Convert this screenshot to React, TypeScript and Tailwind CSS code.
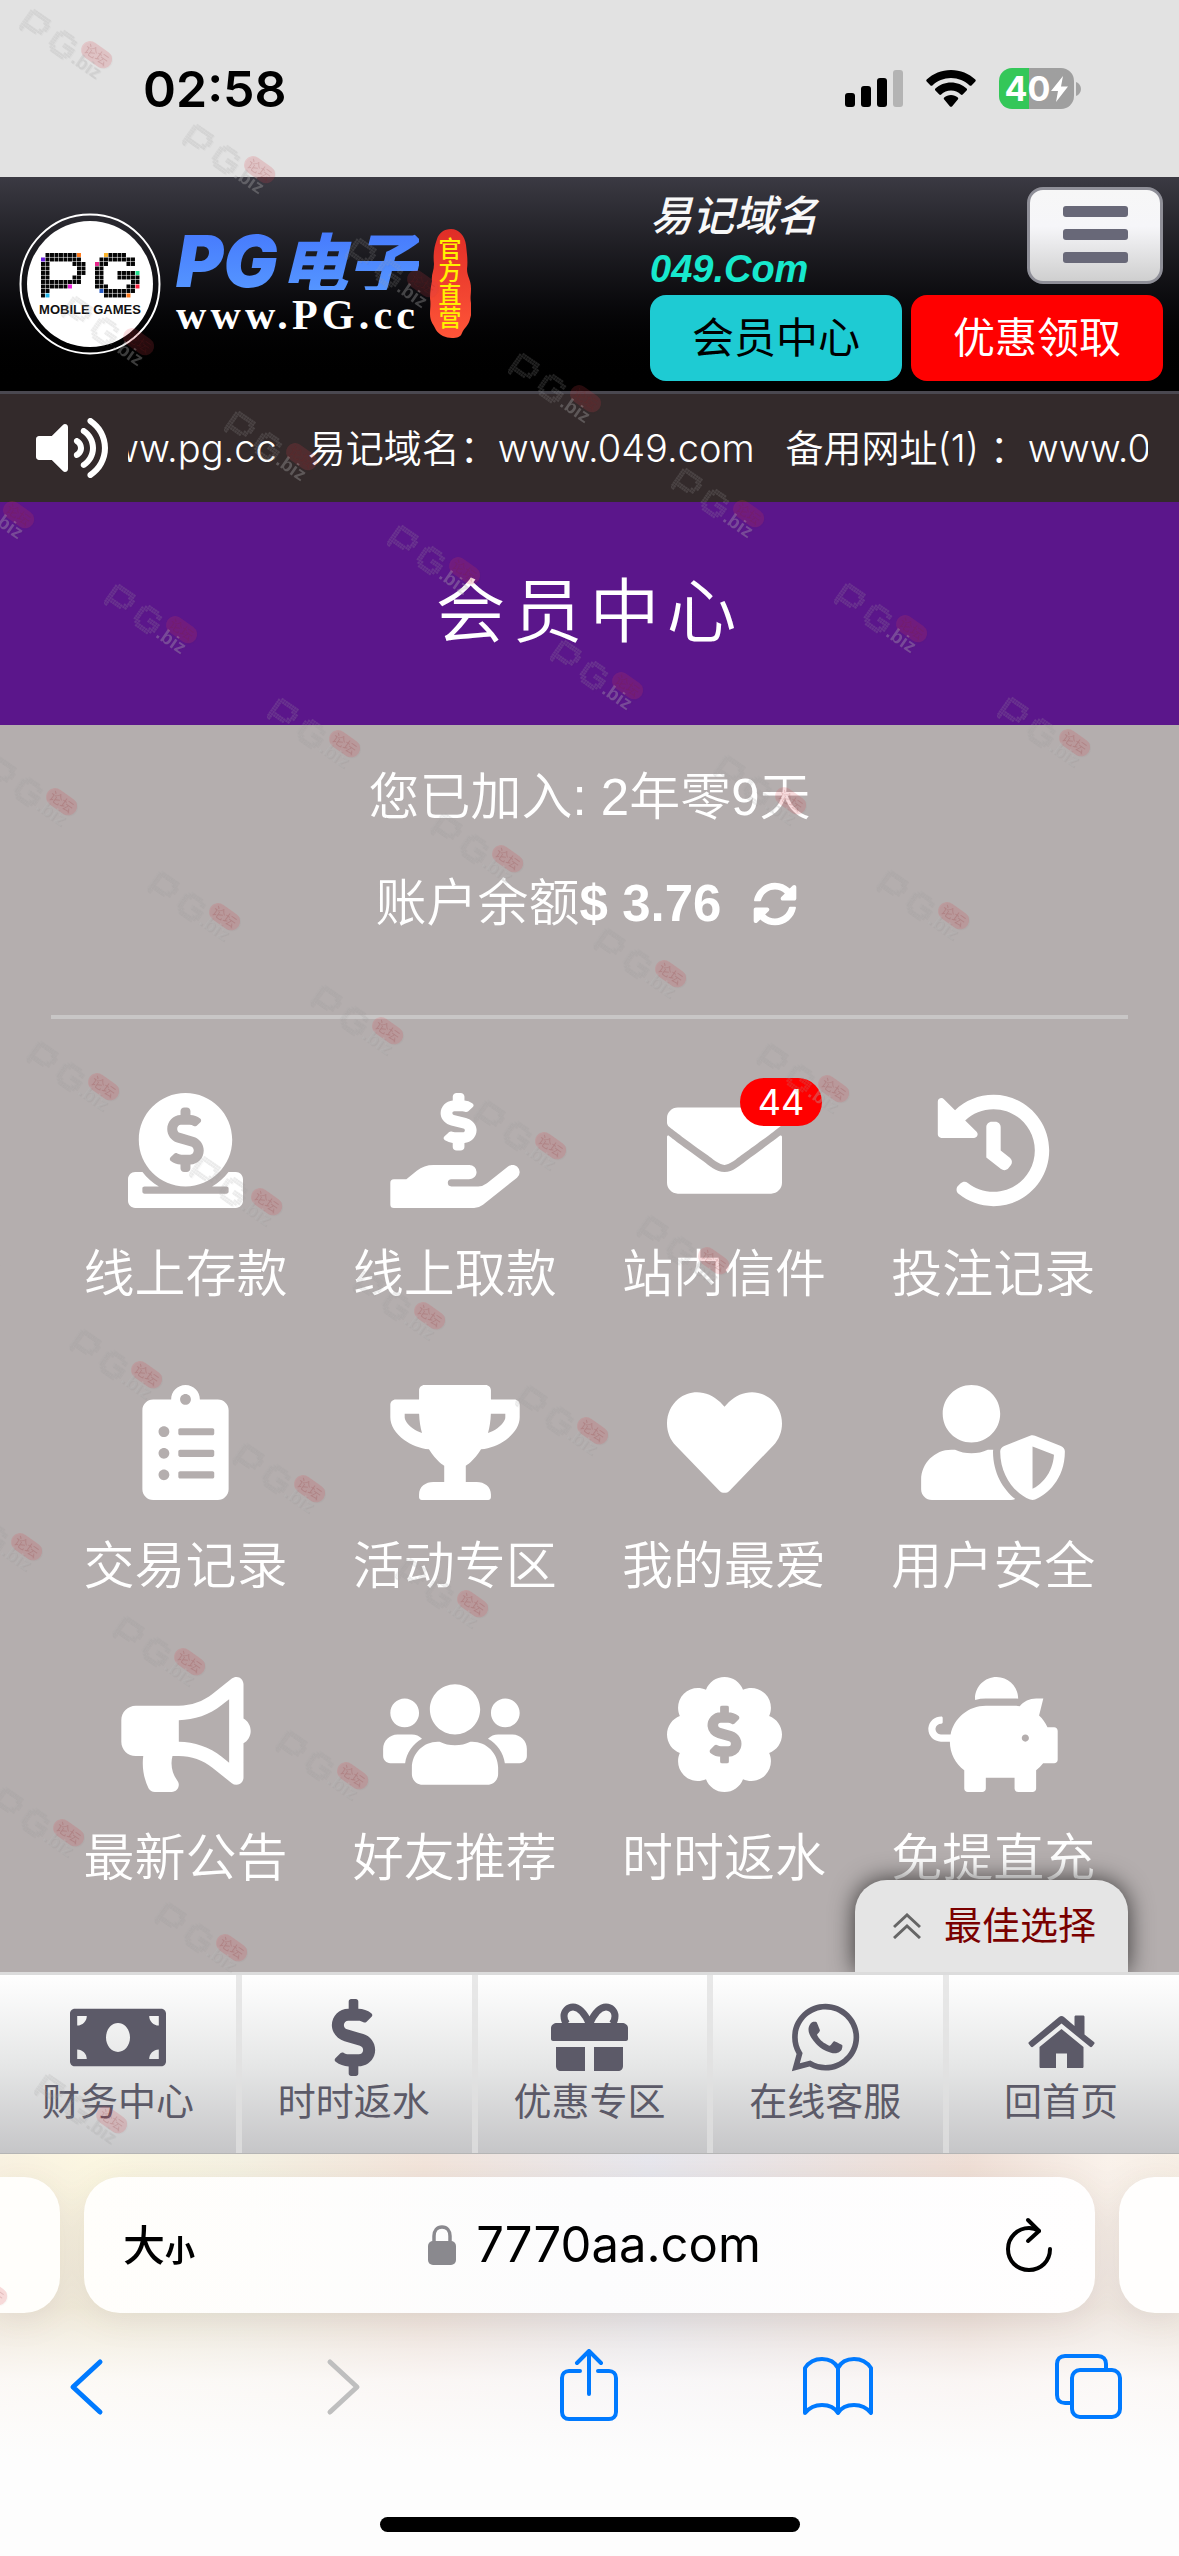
import type { ReactNode } from 'react';
import type { IconType } from 'react-icons';
import {
  FaBullhorn,
  FaClipboardList,
  FaDollarSign,
  FaDonate,
  FaEnvelope,
  FaHandHoldingUsd,
  FaHeart,
  FaHistory,
  FaMoneyBill,
  FaPiggyBank,
  FaSyncAlt,
  FaTrophy,
  FaUsers,
  FaUserShield,
  FaVolumeUp,
  FaWhatsapp,
} from 'react-icons/fa';

const P_ROWS = [
  '.#######o.',
  'v########.',
  '##.....###',
  '##......##',
  '##......##',
  '##.....##.',
  '#########.',
  '######m...',
  '##........',
  '#c........',
];

const G_ROWS = [
  '..y####...',
  '.########.',
  'k##....##.',
  '##........',
  '##...####g',
  '##...#####',
  '##......##',
  '###....##r',
  '.b#######.',
  '..#####o..',
];

const DOT_COLORS: Record<string, string> = {
  '#': '#050505',
  o: '#ff7a1a',
  v: '#6a1fe0',
  m: '#ec1fd8',
  c: '#25b7ea',
  y: '#fdb52a',
  k: '#e8248a',
  g: '#23e08f',
  r: '#fb2440',
  b: '#2358c4',
};

function Dots({ rows, x, y, cell, mono }: { rows: string[]; x: number; y: number; cell: number; mono?: boolean }) {
  return (
    <g>
      {rows.flatMap((row, r) =>
        row.split('').map((ch, c) =>
          ch === '.' ? null : (
            <rect
              key={`${r}-${c}`}
              x={x + c * cell}
              y={y + r * cell}
              width={cell * 0.88}
              height={cell * 0.88}
              fill={mono ? 'currentColor' : DOT_COLORS[ch]}
            />
          )
        )
      )}
    </g>
  );
}

function StatusBar() {
  return (
    <div className="flex h-[177px] items-center justify-between bg-[#e2e2e2] pl-[143px] pr-[98px]">
      <time className="font-['Inter',sans-serif] text-[50px] font-semibold leading-[60px] text-black">02:58</time>
      <div className="flex items-center gap-[23px]">
        <svg viewBox="0 0 58 37" className="h-[37px] w-[58px]" aria-label="Signal">
          <rect x="0" y="23" width="10" height="14" rx="3" />
          <rect x="16" y="16" width="10" height="21" rx="3" />
          <rect x="32" y="8" width="10" height="29" rx="3" />
          <rect x="48" y="0" width="10" height="37" rx="3" fill="#b4b4b4" />
        </svg>
        <svg viewBox="0 0 50 37" className="h-[37px] w-[50px]" aria-label="Wi-Fi">
          <path d="M25 0C34.500 0 43 3.600 49.300 9.600c.6.6.6 1.400 0 2L45.500 15.400c-.5.5-1.300.5-1.900 0C38.700 10.800 32.200 8 25 8S11.300 10.800 6.400 15.400c-.6.5-1.400.5-1.900 0L.7 11.600c-.6-.6-.6-1.400 0-2C7 3.600 15.500 0 25 0z" />
          <path d="M25 12.500c6 0 11.500 2.300 15.600 6.100.6.6.6 1.400 0 2l-3.900 3.900c-.5.5-1.300.5-1.900 0C32.200 22 28.800 20.600 25 20.600s-7.200 1.400-9.800 3.900c-.6.5-1.400.5-1.900 0l-3.900-3.900c-.6-.6-.6-1.400 0-2C13.500 14.800 19 12.500 25 12.500z" />
          <path d="M25 25c2.600 0 5 1 6.800 2.600.6.6.6 1.400 0 2L26 36.400c-.6.6-1.400.6-2 0l-5.800-6.800c-.6-.6-.6-1.400 0-2C20 26 22.400 25 25 25z" />
        </svg>
        <div className="flex items-center gap-[2px]">
          <div className="flex h-[41px] w-[75px] items-center justify-center gap-[1px] rounded-[13px] bg-linear-to-r from-[#34c759] from-40% to-[#9f9f9f] to-40%">
            <span className="font-['Inter',sans-serif] text-[34px] font-bold leading-[40px] text-white">40</span>
            <svg viewBox="0 0 17 26" className="h-[26px] w-[17px]" fill="#fff">
              <path d="M12 0 0 15h7L5 26 17 10.500h-7L12 0z" />
            </svg>
          </div>
          <svg viewBox="0 0 5 14" className="h-[14px] w-[5px]" fill="#a3a3a3">
            <path d="M0 0c3 1 5 4 5 7s-2 6-5 7z" />
          </svg>
        </div>
      </div>
    </div>
  );
}

function Logo() {
  return (
    <a href="#home" className="flex items-center" aria-label="PG电子">
      <svg viewBox="0 0 142 142" className="h-[142px] w-[142px]">
        <circle cx="71" cy="71" r="69.500" fill="none" stroke="#fff" strokeWidth="2" />
        <circle cx="71" cy="71" r="63" fill="#fff" />
        <Dots rows={P_ROWS} x={22} y={40} cell={4.5} />
        <Dots rows={G_ROWS} x={76} y={40} cell={4.5} />
        <text x="71" y="101" textAnchor="middle" fontSize="13" fontWeight="700" fontFamily="Liberation Sans, sans-serif" fill="#111">
          MOBILE GAMES
        </text>
      </svg>
      <div className="ml-[15px] flex flex-col gap-[4px]">
        <span className="flex items-center gap-[2px] bg-linear-to-b from-[#477bfd] to-[#5595ff] bg-clip-text leading-[58px] text-transparent">
          <span className="font-['Inter',sans-serif] text-[72px] font-black italic">PG</span>
          <span className="font-['Noto_Sans_CJK_SC',sans-serif] text-[68px] font-black italic">电子</span>
        </span>
        <span className="font-['Liberation_Serif',serif] text-[42px] font-bold leading-[42px] tracking-widest text-white">
          www.PG.cc
        </span>
      </div>
      <span className="relative ml-[10px] flex h-[110px] w-[42px] items-center justify-center">
        <svg viewBox="0 0 42 110" className="absolute inset-0 h-full w-full">
          <defs>
            <linearGradient id="seal" x1="0" y1="0" x2="0" y2="1">
              <stop offset="0" stopColor="#df2d27" />
              <stop offset="1" stopColor="#ff5538" />
            </linearGradient>
          </defs>
          <path
            fill="url(#seal)"
            d="M22 0C30 0 36 7 37 16c1 9 2 16 1 24 0 8 4 10 4 20 0 6-1 8 0 14 1 5 1 10-1 16-1 6-6 9-8 14-1 4-5 5-10 5-6 0-13-3-16-8-2-5-6-8-6-16 0-6 1-9 0-16 0-7 1-12 2-17-1-6 2-10 2-17-1-9 0-17 3-25C10 4 15 0 22 0z"
          />
        </svg>
        <span className="relative w-[23px] text-center text-[23px] leading-[23px] font-medium text-[#fff200]">官方直营</span>
      </span>
    </a>
  );
}

function Header() {
  return (
    <header className="flex items-center justify-between border-b-[3px] border-[#4a4850] bg-linear-to-b from-[#3b3a43] to-black pl-[19px] pr-[16px]">
      <Logo />
      <div className="w-[513px] shrink-0 pb-[10px] pt-[10px]">
        <div className="flex items-start justify-between">
          <p className="pt-[4px] font-bold italic leading-[52px]">
            <span className="block text-[42px] font-medium text-[#f8f8f8]">易记域名</span>
            <span className="block text-[38px] text-[#17e8cd]">049.Com</span>
          </p>
          <button
            type="button"
            aria-label="菜单"
            className="flex h-[97px] w-[136px] flex-col items-center gap-[12px] rounded-[16px] border-[3px] border-[#8f8f98] bg-linear-to-b from-[#f7f7f7] via-[#f6f6f9] via-40% to-[#cfcfcf] pt-[16px]"
          >
            <span className="h-[11px] w-[65px] rounded-[3px] bg-[#686878]" />
            <span className="h-[11px] w-[65px] rounded-[3px] bg-[#686878]" />
            <span className="h-[11px] w-[65px] rounded-[3px] bg-[#686878]" />
          </button>
        </div>
        <div className="grid grid-cols-2 gap-[9px] text-[42px] leading-[88px]">
          <a href="#member" className="h-[86px] rounded-[16px] bg-[#1ecbd3] text-center text-black">
            会员中心
          </a>
          <a href="#promo" className="h-[86px] rounded-[16px] bg-[#ff0000] text-center text-white">
            优惠领取
          </a>
        </div>
      </div>
    </header>
  );
}

function Notice() {
  return (
    <div className="flex h-[108px] items-center gap-[20px] bg-[#332a2b] pl-[36px] pr-[31px] text-white">
      <FaVolumeUp size={64} className="w-[72px] shrink-0" />
      <div className="flex-1 overflow-hidden whitespace-nowrap font-['Inter','Noto_Sans_CJK_SC',sans-serif] text-[38px] font-[350] leading-[58px]">
        <div className="-ml-[51px] flex gap-[31px]">
          <span>www.pg.cc</span>
          <span>易记域名：www.049.com</span>
          <span>备用网址(1) ：www.049.com</span>
        </div>
      </div>
    </div>
  );
}

function RebateIcon({ className }: { className?: string }) {
  return (
    <svg viewBox="0 0 512 512" className={className} fill="currentColor">
      <path d="M512 256c0-37.700-23.700-69.900-57.100-82.400 14.700-32.400 8.800-71.900-17.900-98.600-26.700-26.700-66.200-32.600-98.600-17.900C325.900 23.700 293.700 0 256 0s-69.900 23.700-82.400 57.100c-32.400-14.700-72-8.800-98.600 17.900-26.700 26.700-32.600 66.200-17.900 98.600C23.700 186.100 0 218.300 0 256s23.700 69.900 57.100 82.400c-14.700 32.400-8.800 72 17.900 98.600 26.600 26.600 66.100 32.700 98.600 17.900 12.500 33.300 44.700 57.100 82.400 57.100s69.900-23.700 82.400-57.100c32.600 14.800 72 8.700 98.600-17.900 26.700-26.700 32.600-66.200 17.900-98.600 33.400-12.500 57.100-44.700 57.100-82.400z" />
      <FaDollarSign x={128} y={128} size={256} color="#b4aeae" stroke="#b4aeae" strokeWidth={14} />
    </svg>
  );
}

function GiftIcon({ size }: { size: number }) {
  return (
    <svg viewBox="0 0 77 77" width={size} height={size} fill="currentColor">
      <path d="M6 24h65c3 0 6 2 6 5v11c0 1-1 2-2 2H2c-1 0-2-1-2-2V29c0-3 3-5 6-5z" />
      <path d="M5 48h29v24H10c-3 0-5-2-5-5zM43 48h29v19c0 3-2 5-5 5H43z" />
      <path
        d="M38.500 25C34 15 29 8 22 8c-5 0-9 4-9 9 0 3 1 6 3 8M38.500 25C43 15 48 8 55 8c5 0 9 4 9 9 0 3-1 6-3 8"
        fill="none"
        stroke="currentColor"
        strokeWidth="7"
      />
    </svg>
  );
}

function HomeIcon({ size }: { size: number }) {
  return (
    <svg viewBox="0 0 77 77" width={size} height={size} fill="currentColor">
      <path d="M38.500 30 60.500 48v19.500c0 1-.5 1.500-1.500 1.500H44V54.500H33V69H18c-1 0-1.500-.5-1.500-1.500V48z" />
      <path d="M36 18c1.500-1.500 3.500-1.500 5 0l10.500 9v-9c0-1 .5-1.500 1.500-1.500h7c1 0 1.500.5 1.500 1.500v17.500L71 43c.7.6.7 1.300.2 2l-2.200 2.700c-.6.6-1.300.7-2 .1L38.500 24.500 10 47.800c-.7.6-1.400.5-2-.1L5.800 45c-.5-.7-.5-1.400.2-2z" />
    </svg>
  );
}

interface Tile {
  label: string;
  icon: IconType | typeof RebateIcon;
  width: string;
  count?: number;
}

const tiles: Tile[] = [
  { label: '线上存款', icon: FaDonate, width: 'w-[115px]' },
  { label: '线上取款', icon: FaHandHoldingUsd, width: 'w-[130px]' },
  { label: '站内信件', icon: FaEnvelope, width: 'w-[115px]', count: 44 },
  { label: '投注记录', icon: FaHistory, width: 'w-[115px]' },
  { label: '交易记录', icon: FaClipboardList, width: 'w-[115px]' },
  { label: '活动专区', icon: FaTrophy, width: 'w-[130px]' },
  { label: '我的最爱', icon: FaHeart, width: 'w-[115px]' },
  { label: '用户安全', icon: FaUserShield, width: 'w-[144px]' },
  { label: '最新公告', icon: FaBullhorn, width: 'w-[130px]' },
  { label: '好友推荐', icon: FaUsers, width: 'w-[144px]' },
  { label: '时时返水', icon: RebateIcon, width: 'w-[115px]' },
  { label: '免提直充', icon: FaPiggyBank, width: 'w-[130px]' },
];

function Member() {
  return (
    <main className="relative bg-[#b4aeae] px-[51px] text-[51px] font-[350] text-white">
      <div className="flex flex-col items-center pb-[74px] pt-[33px]">
        <p className="leading-[80px]">您已加入: 2年零9天</p>
        <p className="mt-[28px] flex items-center pr-[6px] leading-[75px]">
          账户余额<strong className="font-bold">$ 3.76</strong>
          <button type="button" aria-label="刷新" className="ml-[32px]">
            <FaSyncAlt size={44} />
          </button>
        </p>
      </div>
      <hr className="border-t-[4px] border-[#c8c6c6]" />
      <ul className="grid grid-cols-4 gap-y-[71px] pb-[74px] pt-[74px]">
        {tiles.map(({ label, icon: Icon, width, count }) => (
          <li key={label}>
            <a href={`#${label}`} className="flex flex-col items-center gap-[28px]">
              <span className="relative">
                <Icon className={`h-[115px] ${width}`} />
                {count && (
                  <span className="absolute -top-[15px] left-[73px] rounded-full bg-[#ff0000] px-[18px] font-['Inter',sans-serif] text-[36px] font-normal leading-[48px]">
                    {count}
                  </span>
                )}
              </span>
              <span className="leading-[78px]">{label}</span>
            </a>
          </li>
        ))}
      </ul>
      <button
        type="button"
        className="absolute bottom-0 right-[51px] flex h-[92px] w-[273px] items-center justify-center gap-[23px] rounded-t-[32px] bg-[#e5e5e5] pl-[6px] text-[38px] font-normal text-[#7a0000] shadow-[0_0_24px_rgba(0,0,0,0.7)]"
      >
        <svg viewBox="0 0 28 26" className="h-[26px] w-[28px]" fill="none" stroke="#666" strokeWidth="3">
          <path d="M1 14 14 2l13 12M1 25l13-12 13 12" />
        </svg>
        最佳选择
      </button>
    </main>
  );
}

const navItems: { label: string; icon: ReactNode }[] = [
  { label: '财务中心', icon: <FaMoneyBill size={77} className="w-[96px]" /> },
  { label: '时时返水', icon: <FaDollarSign size={77} /> },
  { label: '优惠专区', icon: <GiftIcon size={77} /> },
  { label: '在线客服', icon: <FaWhatsapp size={77} /> },
  { label: '回首页', icon: <HomeIcon size={77} /> },
];

function BottomNav() {
  return (
    <nav className="relative grid grid-cols-5 border-t-[3px] border-b border-t-[#dcdcdc] border-b-[#b5b5b5] bg-linear-to-b from-white via-[#e6e7e7] via-50% to-[#c6c6c8] text-[#5c5a68]">
      {navItems.map(({ label, icon }) => (
        <a
          key={label}
          href={`#${label}`}
          className="flex flex-col items-center pb-[25px] pt-[24px] not-first:shadow-[inset_6px_0_0_rgba(224,224,224,0.75)]"
        >
          {icon}
          <span className="text-[38px] leading-[52px]">{label}</span>
        </a>
      ))}
    </nav>
  );
}

function Toolbar() {
  return (
    <div className="flex h-[72px] items-center justify-between pl-[51px] pr-[55px] text-[#007aff]">
      <button type="button" aria-label="后退">
        <svg viewBox="0 0 70 72" className="h-[72px] w-[70px]" fill="none" stroke="currentColor" strokeWidth="5" strokeLinecap="round" strokeLinejoin="round">
          <path d="M49 13 22 38l27 25" />
        </svg>
      </button>
      <button type="button" aria-label="前进" className="text-[#bfbfbf]">
        <svg viewBox="0 0 70 72" className="h-[72px] w-[70px]" fill="none" stroke="currentColor" strokeWidth="5" strokeLinecap="round" strokeLinejoin="round">
          <path d="m28 13 27 25-27 25" />
        </svg>
      </button>
      <button type="button" aria-label="分享">
        <svg viewBox="-7 0 70 72" className="h-[72px] w-[70px]" fill="none" stroke="currentColor" strokeWidth="4" strokeLinecap="round" strokeLinejoin="round">
          <path d="M20 22H9c-4 0-7 3-7 7v34c0 4 3 7 7 7h40c4 0 7-3 7-7V29c0-4-3-7-7-7H38" />
          <path d="M29 45V3M17 14 29 2l12 12" />
        </svg>
      </button>
      <button type="button" aria-label="书签">
        <svg viewBox="1 0 70 72" className="h-[72px] w-[70px]" fill="none" stroke="currentColor" strokeWidth="4" strokeLinejoin="round">
          <path d="M36 19c-3-6-9-9-16-9-7 0-13 3-17 9v45c4-5 10-8 17-8 7 0 13 3 16 8 3-5 9-8 16-8 7 0 13 3 17 8V19c-4-6-10-9-17-9-7 0-13 3-16 9zM36 19v46" />
        </svg>
      </button>
      <button type="button" aria-label="标签页">
        <svg viewBox="0 0 70 72" className="h-[72px] w-[70px]" fill="none" stroke="currentColor" strokeWidth="4">
          <rect x="18" y="21" width="48" height="47" rx="8" />
          <path d="M18 54h-7c-5 0-8-3-8-8V15c0-5 3-8 8-8h33c5 0 8 3 8 8v6" />
        </svg>
      </button>
    </div>
  );
}

function BrowserBar() {
  return (
    <footer className="bg-[linear-gradient(to_bottom,rgba(255,255,255,0.2)_0%,rgba(226,220,216,0.45)_38%,rgba(252,250,250,0.85)_56%,#fdfdfd_76%),linear-gradient(to_right,#f8efda_0%,#fbf5da_8%,#f3efdc_20%,#f0dfd3_36%,#e2e2ea_55%,#ecd8cd_82%,#f9efe6_94%,#f5ebdf_100%)] pb-[24px] pt-[23px] font-['Inter','Noto_Sans_CJK_SC',sans-serif]">
      <div className="flex gap-[24px] drop-shadow-[0_6px_16px_rgba(60,40,30,0.08)]">
        <div className="w-[60px] rounded-r-[36px] bg-[#fffefb]" />
        <div className="flex h-[136px] flex-1 items-center justify-between rounded-[36px] bg-linear-to-r from-[#fffefb] via-[#fcfcfd] to-[#fffefe] pl-[39px] pr-[43px] text-black">
          <button type="button" className="flex items-baseline font-medium">
            <span className="text-[42px]">大</span>
            <span className="text-[30px] font-bold">小</span>
          </button>
          <label className="mr-[12px] flex items-center gap-[20px]">
            <svg viewBox="0 0 28 40" className="h-[40px] w-[28px]" aria-label="安全连接">
              <path d="M6 18v-7c0-5 3-9 8-9s8 4 8 9v7" fill="none" stroke="#8a898e" strokeWidth="3.500" />
              <rect y="16" width="28" height="24" rx="5" fill="#8a898e" />
            </svg>
            <input type="text" readOnly defaultValue="7770aa.com" className="field-sizing-content text-[49px] leading-[60px] outline-none" />
          </label>
          <button type="button" aria-label="重新载入">
            <svg viewBox="0 0 46 56" className="h-[56px] w-[46px]" fill="none" stroke="#000" strokeWidth="4" strokeLinecap="round" strokeLinejoin="round">
              <path d="M33 14c-3-2-6-3-10-3C12 11 2 20 2 32s9 21 21 21 21-9 21-21" />
              <path d="m22 3 11 11-11 10" />
            </svg>
          </button>
        </div>
        <div className="w-[60px] rounded-l-[36px] bg-[#fffefd]" />
      </div>
      <div className="pt-[36px]">
        <Toolbar />
      </div>
      <div className="mx-auto mt-[96px] h-[15px] w-[420px] rounded-full bg-black" />
    </footer>
  );
}

// Diagonal rows of marks: start point and number of marks in each
const MARK_ROWS = [
  { x: 19, y: 6, n: 7 },
  { x: 61, y: 293, n: 6 },
  { x: -59, y: 466, n: 6 },
  { x: -16, y: 753, n: 5 },
  { x: 26, y: 1038, n: 4 },
  { x: -94, y: 1211, n: 4 },
  { x: -51, y: 1498, n: 3 },
  { x: -9, y: 1784, n: 2 },
  { x: 34, y: 2071, n: 1 },
  { x: -86, y: 2243, n: 1 },
];

const marks = MARK_ROWS.flatMap(({ x, y, n }) =>
  Array.from({ length: n }, (_, i) => ({ left: x + i * 163, top: Math.round(y + i * 114.7) }))
);

function Watermarks() {
  return (
    <div className="pointer-events-none absolute inset-0 overflow-hidden" aria-hidden="true">
      {marks.map((pos) => (
        <svg
          key={`${pos.left}-${pos.top}`}
          viewBox="0 0 110 100"
          className="absolute h-[100px] w-[110px] text-[#a8a8a8]/20 drop-shadow-[1px_1px_0_rgba(60,60,60,0.14)]"
          style={pos}
        >
          <g transform="translate(0 20) rotate(35)" fontFamily="Liberation Sans, Noto Sans CJK SC, sans-serif">
            <Dots rows={P_ROWS} x={0} y={-23} cell={2.6} mono />
            <Dots rows={G_ROWS} x={34} y={-23} cell={2.6} mono />
            <rect x="63" y="-30" width="34" height="18" rx="9" fill="#e8404c" fillOpacity="0.17" />
            <text x="80" y="-16" textAnchor="middle" fontSize="13" fill="#802020" fillOpacity="0.16">
              论坛
            </text>
            <text x="62" y="0" fontSize="19" fontWeight="700" fill="#b8b8b8" fillOpacity="0.32">
              .biz
            </text>
          </g>
        </svg>
      ))}
    </div>
  );
}

export default function App() {
  return (
    <div className="relative w-full overflow-hidden bg-[#fdfdfd] font-['Liberation_Sans','Noto_Sans_CJK_SC',sans-serif]">
      <StatusBar />
      <Header />
      <Notice />
      <h1 className="bg-[#5b168b] text-center text-[70px] font-[350] leading-[223px] tracking-widest text-white">会员中心</h1>
      <Member />
      <BottomNav />
      <BrowserBar />
      <Watermarks />
    </div>
  );
}
